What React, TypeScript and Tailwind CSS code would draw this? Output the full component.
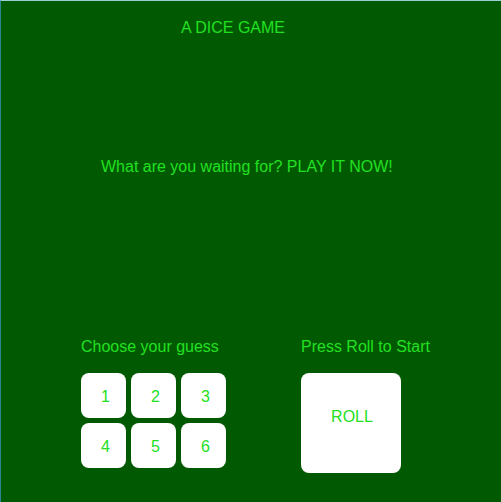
import React from "react";

export default function App() {
  const nums = [1, 2, 3, 4, 5, 6];
  return (
    <div
      className="w-[501px] h-[502px] bg-[#015a01] border-l border-t border-l-[#2a8492] border-t-[#9ccfcf] flex flex-col text-[16px] leading-[18px] text-[#22e022]"
      style={{ fontFamily: '"Liberation Sans", Arial, sans-serif' }}
    >
      <div className="pt-[18px] pl-[180px]">A DICE GAME</div>
      <div className="pt-[121px] pl-[100px]">What are you waiting for? PLAY IT NOW!</div>
      <div className="pt-[162px] pl-[80px] flex">
        <div className="w-[220px] flex flex-col">
          <div>Choose your guess</div>
          <div className="mt-[17px] grid grid-cols-[45px_45px_45px] gap-[5px]">
            {nums.map((n) => (
              <div
                key={n}
                className="w-[45px] h-[45px] bg-white rounded-[8px] flex items-center justify-center pl-[4px] pt-[3px]"
              >
                {n}
              </div>
            ))}
          </div>
        </div>
        <div className="flex flex-col">
          <div>Press Roll to Start</div>
          <div className="mt-[17px] w-[100px] h-[100px] bg-white rounded-[8px] flex items-center justify-center pb-[12px] pl-[2px]">
            ROLL
          </div>
        </div>
      </div>
    </div>
  );
}
